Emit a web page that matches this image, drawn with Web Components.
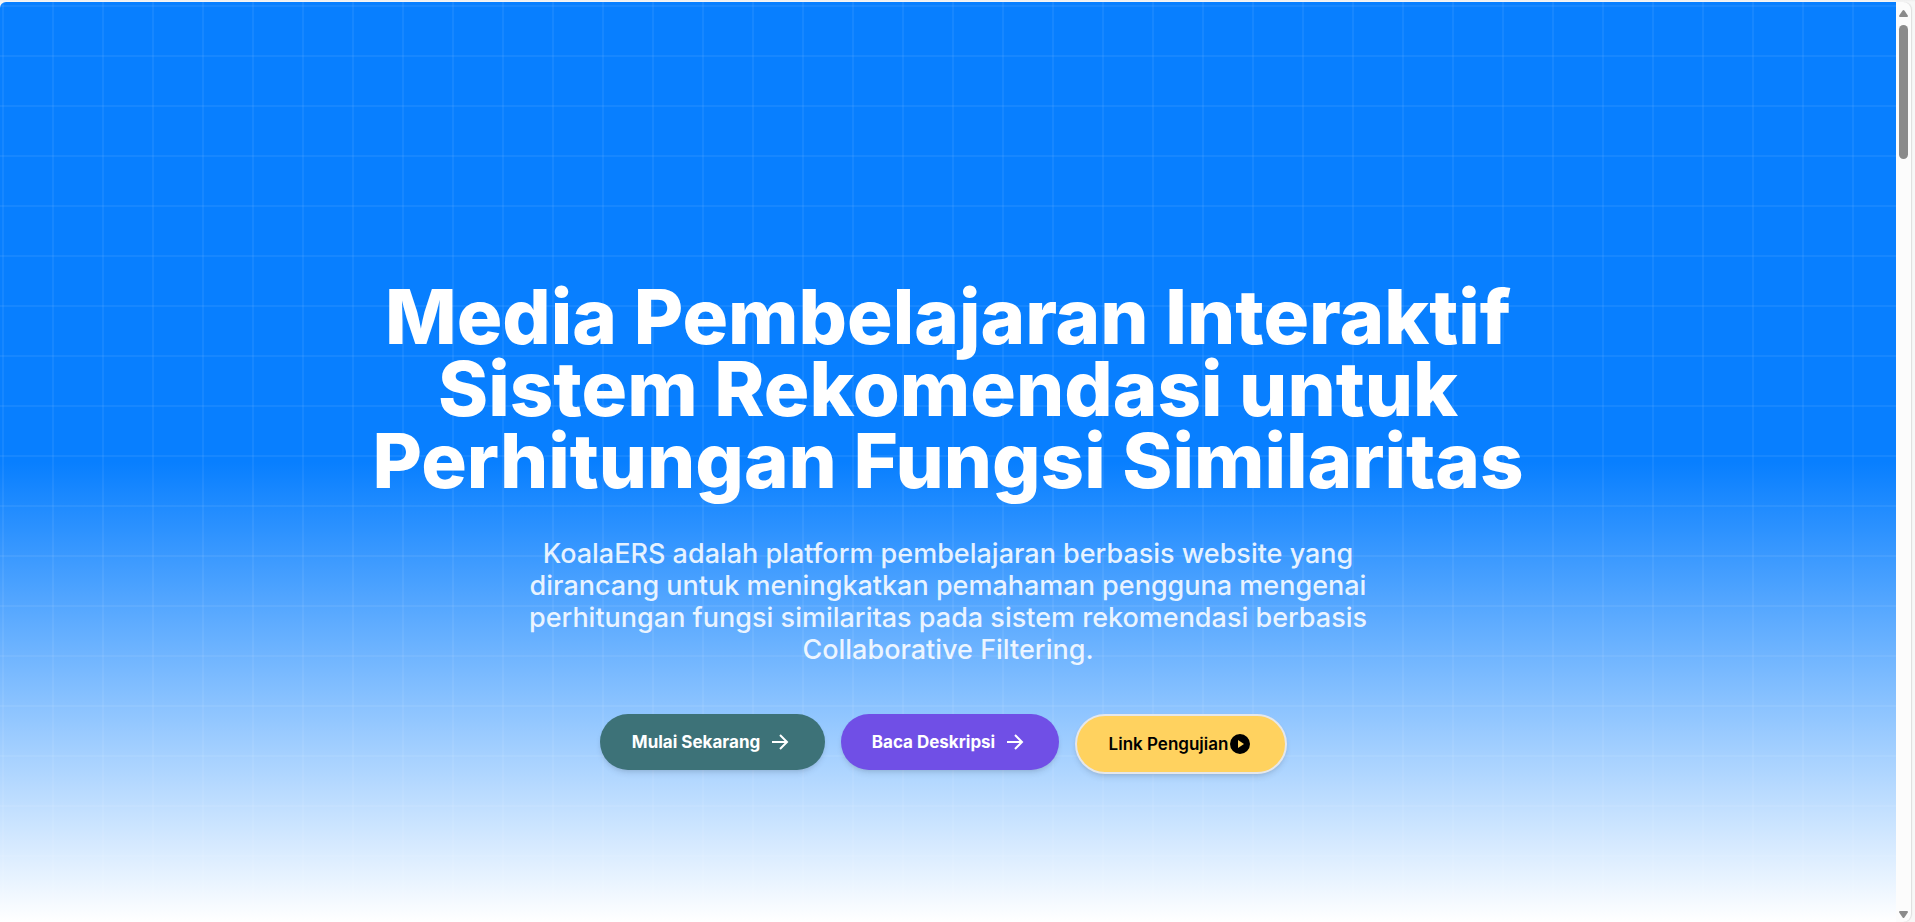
<!DOCTYPE html>
<html lang="id">
<head>
<meta charset="utf-8">
<meta name="viewport" content="width=device-width, initial-scale=1">
<title>KoalaERS</title>
<style>
  body { margin: 0; font-family: Inter, "Open Sans", sans-serif; }
</style>
</head>
<body>
<koala-window>
  <koala-hero>
    <span slot="title">Media Pembelajaran Interaktif Sistem Rekomendasi untuk Perhitungan Fungsi Similaritas</span>
    <span slot="lead">KoalaERS adalah platform pembelajaran berbasis website yang dirancang untuk meningkatkan pemahaman pengguna mengenai perhitungan fungsi similaritas pada sistem rekomendasi berbasis Collaborative Filtering.</span>
    <koala-button slot="actions" tone="teal" icon="arrow">Mulai Sekarang</koala-button>
    <koala-button slot="actions" tone="violet" icon="arrow">Baca Deskripsi</koala-button>
    <koala-button slot="actions" tone="amber" icon="play">Link Pengujian</koala-button>
  </koala-hero>
  <koala-scrollbar slot="rail"></koala-scrollbar>
</koala-window>

<template id="window-template">
  <style>
    :host {
      display: grid;
      grid-template-columns: minmax(0, 1fr) 15px;
      box-sizing: border-box;
      min-height: 100vh;
      padding: 2px 4px 0 0;
      background: linear-gradient(#eeeeee, #f7f7f7 2px);
    }
    .view { display: grid; overflow: hidden; border-radius: 6px 0 0 0; }
    .rail { display: grid; overflow: hidden; border-radius: 0 8px 8px 0; background: #fcfcfc; box-shadow: 1px 0 1px #dddddd; }
  </style>
  <div class="view"><slot></slot></div>
  <div class="rail"><slot name="rail"></slot></div>
</template>

<template id="scrollbar-template">
  <style>
    :host {
      display: flex;
      flex-direction: column;
      align-items: center;
      box-sizing: border-box;
      padding: 8px 0 4px;
    }
    svg { display: block; width: 9px; height: 7px; fill: #8b8b8b; }
    .thumb { width: 9px; height: 134px; margin-top: 8px; border-radius: 5px; background: #8b8b8b; }
    .down { margin-top: auto; }
  </style>
  <svg viewBox="0 0 9 7" aria-hidden="true"><path d="M3.6.6Q4.5-.5 5.4.6L8.8 5.5Q9.3 7 8 7H1Q-.3 7 .2 5.5Z"/></svg>
  <div class="thumb"></div>
  <svg class="down" viewBox="0 0 9 7" aria-hidden="true"><path d="M3.6 6.4Q4.5 7.5 5.4 6.4L8.8 1.5Q9.3 0 8 0H1Q-.3 0 .2 1.5Z"/></svg>
</template>

<template id="hero-template">
  <style>
    :host {
      display: block;
      box-sizing: border-box;
      padding: 278px 24px 144px;
      text-align: center;
      background:
        linear-gradient(90deg, rgb(255 255 255 / 6%) 2px, transparent 2px) 2px 3px / 50px 50px,
        linear-gradient(rgb(255 255 255 / 6%) 2px, transparent 2px) 2px 3px / 50px 50px,
        linear-gradient(#087fff 50%, #ffffff);
    }
    h1 {
      max-width: 1200px;
      margin: 0 auto 42px;
      font-size: 76px;
      line-height: 72px;
      font-weight: 800;
      color: #ffffff;
    }
    p {
      max-width: 880px;
      margin: 0 auto 48px;
      font-size: 27px;
      line-height: 32px;
      font-weight: 500;
      color: rgb(255 255 255 / 88%);
    }
    .actions {
      display: flex;
      flex-wrap: wrap;
      justify-content: center;
      align-items: flex-start;
      gap: 16px;
      padding-right: 10px;
    }
  </style>
  <h1><slot name="title"></slot></h1>
  <p><slot name="lead"></slot></p>
  <div class="actions"><slot name="actions"></slot></div>
</template>

<template id="button-template">
  <style>
    :host { display: block; }
    button {
      display: flex;
      align-items: center;
      justify-content: center;
      gap: 8px;
      box-sizing: border-box;
      min-width: 225px;
      height: 56px;
      padding: 0 30px;
      border: 0;
      border-radius: 30px;
      font: 700 17px/24px Inter, "Open Sans", sans-serif;
      color: #ffffff;
      background: #3d7278;
      box-shadow: 0 4px 6px -1px rgb(0 0 0 / 10%), 0 2px 4px -2px rgb(0 0 0 / 10%);
      cursor: pointer;
      white-space: nowrap;
    }
    :host([tone="violet"]) button { min-width: 218px; background: #704fe6; }
    :host([tone="amber"]) button {
      min-width: 212px;
      height: 60px;
      gap: 0;
      border: 2px solid #e5e7eb;
      font-weight: 600;
      color: #000000;
      background: #ffd25f;
    }
    svg { display: none; width: 24px; height: 24px; flex: none; }
    :host([icon="arrow"]) .arrow, :host([icon="play"]) .play { display: block; }
  </style>
  <button type="button">
    <slot></slot>
    <svg class="arrow" viewBox="0 0 24 24" fill="none" stroke="currentColor" stroke-width="2" aria-hidden="true"><path d="M4 12H19M12 5L19 12L12 19"/></svg>
    <svg class="play" viewBox="0 0 24 24" fill="currentColor" fill-rule="evenodd" aria-hidden="true"><path d="M12 2A10 10 0 1 1 12 22A10 10 0 0 1 12 2ZM10 8V16L16 12Z"/></svg>
  </button>
</template>

<script>
  class TemplateElement extends HTMLElement {
    constructor() {
      super();
      const template = document.getElementById(this.constructor.templateId);
      this.attachShadow({ mode: "open" }).append(template.content.cloneNode(true));
    }
  }

  class KoalaButton extends TemplateElement { static templateId = "button-template"; }
  class KoalaHero extends TemplateElement { static templateId = "hero-template"; }
  class KoalaScrollbar extends TemplateElement { static templateId = "scrollbar-template"; }
  class KoalaWindow extends TemplateElement { static templateId = "window-template"; }

  customElements.define("koala-button", KoalaButton);
  customElements.define("koala-hero", KoalaHero);
  customElements.define("koala-scrollbar", KoalaScrollbar);
  customElements.define("koala-window", KoalaWindow);
</script>
</body>
</html>
